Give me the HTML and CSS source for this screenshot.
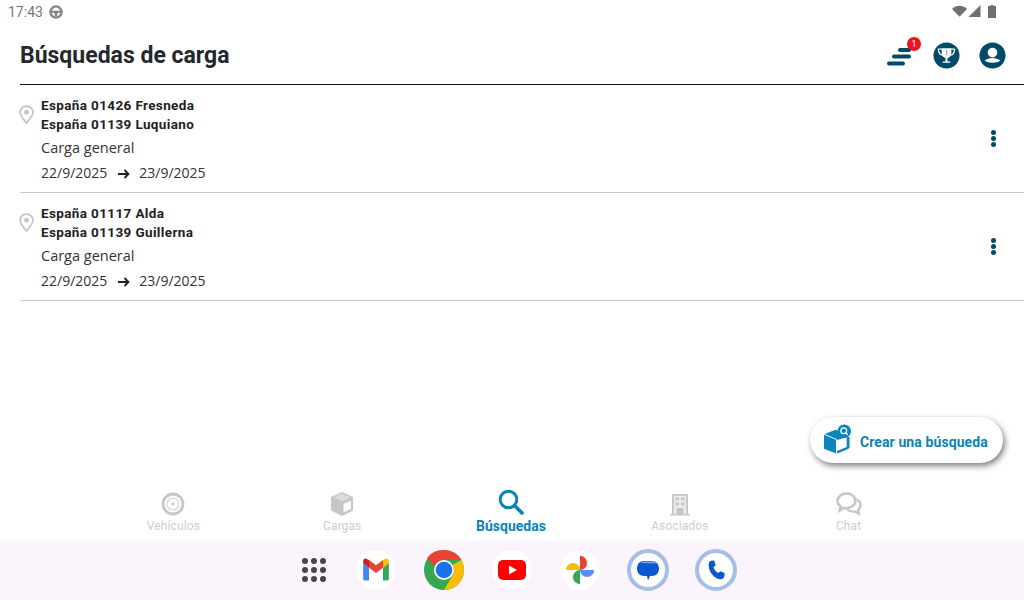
FILE: index.html
```html
<!DOCTYPE html>
<html lang="es">
<head>
<meta charset="utf-8">
<title>Búsquedas de carga</title>
<link rel="stylesheet" href="styles.css">
</head>
<body>
<div class="screen">
  <div class="status">
    <div class="status-left">
      <span class="clock">17:43</span>
      <svg class="status-gear" viewBox="0 0 14 14"><circle cx="7" cy="7" r="5.600" fill="none" stroke="#858585" stroke-width="2.400"/><path d="M2 5.800h10v2H8.800L8 11H6l-.8-3.200H2z" fill="#858585"/></svg>
    </div>
    <div class="status-right">
      <svg class="st-wifi" viewBox="0 0 16 12"><path d="M0 3.800C4.500-.8 11.500-.8 16 3.800L8 12z" fill="#6f6f6f"/></svg>
      <svg class="st-signal" viewBox="0 0 12 12"><path d="M12 0v12H0z" fill="#6f6f6f"/></svg>
      <svg class="st-batt" viewBox="0 0 8 13"><path d="M2.500 0h3v1H8v12H0V1h2.500z" fill="#6f6f6f"/></svg>
    </div>
  </div>

  <header class="header">
    <h1 class="title">Búsquedas de carga</h1>
    <div class="actions">
      <div class="stack">
        <svg class="stack-icon" viewBox="0 0 24 20"><g fill="none" stroke="#004a6c" stroke-width="4" stroke-linecap="round"><path d="M13 3h9"/><path d="M7 9.500h15"/><path d="M2 16.500h14"/></g></svg>
        <span class="badge">1</span>
      </div>
      <svg class="round-icon" viewBox="0 0 28 28"><circle cx="14" cy="14" r="13.500" fill="#004a6c"/><g fill="none" stroke="#fff" stroke-width="1.300"><path d="M9.500 7.500H5.600c0 3.800 1.200 5.700 4.600 6.200M18.500 7.500h3.900c0 3.800-1.200 5.700-4.600 6.200"/></g><path d="M9 6.500h10v5c0 3-2 4.800-4 5.300v3.400h3v1.400h-8v-1.400h3v-3.400c-2-.5-4-2.300-4-5.300z" fill="#fff"/><path d="M13.300 8h1.400v6h-1.400z" fill="#8fb0c0"/></svg>
      <svg class="round-icon" viewBox="0 0 28 28"><circle cx="14" cy="14" r="13.500" fill="#004a6c"/><circle cx="14" cy="11" r="5" fill="#fff"/><path d="M5.800 19.500c2-2.100 5-3 8.200-3s6.200.9 8.200 3c-1.800 1.300-4.800 2-8.200 2s-6.400-.7-8.200-2z" fill="#fff"/></svg>
    </div>
  </header>

  <main class="list">
    <article class="row">
      <svg class="pin" viewBox="0 0 16 20"><path d="M8 1C4 1 1.200 4 1.200 7.600 1.200 11.800 5.500 16 8 19c2.500-3 6.800-7.200 6.800-11.400C14.800 4 12 1 8 1z" fill="none" stroke="#c4c4c4" stroke-width="1.800"/><circle cx="8" cy="7.600" r="2.600" fill="#c4c4c4"/></svg>
      <div class="info">
        <div class="place">España 01426 Fresneda</div>
        <div class="place">España 01139 Luquiano</div>
        <div class="kind">Carga general</div>
        <div class="dates"><span>22/9/2025</span><svg class="arrow" viewBox="0 0 12 10"><path d="M0 5h10M6.500 1l4 4-4 4" fill="none" stroke="#222" stroke-width="1.800"/></svg><span>23/9/2025</span></div>
      </div>
      <div class="more"><i></i><i></i><i></i></div>
    </article>
    <article class="row">
      <svg class="pin" viewBox="0 0 16 20"><path d="M8 1C4 1 1.200 4 1.200 7.600 1.200 11.800 5.500 16 8 19c2.500-3 6.800-7.200 6.800-11.400C14.800 4 12 1 8 1z" fill="none" stroke="#c4c4c4" stroke-width="1.800"/><circle cx="8" cy="7.600" r="2.600" fill="#c4c4c4"/></svg>
      <div class="info">
        <div class="place">España 01117 Alda</div>
        <div class="place">España 01139 Guillerna</div>
        <div class="kind">Carga general</div>
        <div class="dates"><span>22/9/2025</span><svg class="arrow" viewBox="0 0 12 10"><path d="M0 5h10M6.500 1l4 4-4 4" fill="none" stroke="#222" stroke-width="1.800"/></svg><span>23/9/2025</span></div>
      </div>
      <div class="more"><i></i><i></i><i></i></div>
    </article>
  </main>

  <button class="fab">
    <svg class="fab-icon" viewBox="0 0 28 30"><path d="M0 10 12 5.500l5.500 2.500 1 4.500 8 .5v11L12.500 30 0 25z" fill="#0d86bd"/><path d="M13.500 16 24.500 13v10l-11 4.500z" fill="#fff"/><path d="M24.500 13v11.500L13.500 29" fill="none" stroke="#0d86bd" stroke-width="2"/><path d="M0 10l13 5.500V30" fill="none" stroke="#fff" stroke-width="1"/><circle cx="21" cy="7" r="7" fill="#0d86bd"/><circle cx="20.500" cy="6.500" r="3" fill="none" stroke="#fff" stroke-width="1.300"/><path d="M22.700 8.700l2 2" stroke="#fff" stroke-width="1.300"/></svg>
    <span class="fab-label">Crear una búsqueda</span>
  </button>

  <nav class="tabs">
    <div class="tab">
      <svg class="tab-icon" viewBox="0 0 24 24"><circle cx="12" cy="12" r="10" fill="none" stroke="#c6c6c6" stroke-width="2.800"/><circle cx="12" cy="12" r="6" fill="none" stroke="#d6d6d6" stroke-width="1.200"/><circle cx="12" cy="12" r="1.600" fill="#c6c6c6"/></svg>
      <span>Vehículos</span>
    </div>
    <div class="tab">
      <svg class="tab-icon" viewBox="0 0 24 24"><path d="M12 0 23 5v13.500L12 24 1 18.500V5z" fill="#c6c6c6"/><path d="M3.500 5.500 12 1.800 20.500 5.500 12 9.500z" fill="#dcdcdc"/><path d="M13.500 12 21 8.500v8.200L13.500 20.500z" fill="#fff"/></svg>
      <span>Cargas</span>
    </div>
    <div class="tab active">
      <svg class="tab-icon big" viewBox="0 0 26 26"><circle cx="10.500" cy="10.500" r="8.300" fill="none" stroke="#0b83b5" stroke-width="3"/><path d="M16.500 16.500 24 24" stroke="#0b83b5" stroke-width="3.600" stroke-linecap="round"/></svg>
      <span>Búsquedas</span>
    </div>
    <div class="tab">
      <svg class="tab-icon" viewBox="0 0 24 24"><path d="M4 22V2h16v20h2v1.500H2V22z" fill="#c6c6c6"/><path d="M5.800 3.700h12.400V22H5.800z" fill="#eaeaea"/><g fill="#c6c6c6"><rect x="7.500" y="5.500" width="3.500" height="3"/><rect x="13" y="5.500" width="3.500" height="3"/><rect x="7.500" y="10.500" width="3.500" height="3"/><rect x="13" y="10.500" width="3.500" height="3"/><rect x="8.500" y="16" width="7" height="6"/></g></svg>
      <span>Asociados</span>
    </div>
    <div class="tab">
      <svg class="tab-icon wide" viewBox="0 0 26 24"><path d="M10.500 1.500c5 0 9 3.300 9 7.400s-4 7.300-9 7.300c-1 0-1.900-.1-2.700-.3L3.800 18.500l.9-4C2.800 13 1.500 11.100 1.500 8.900c0-4.100 4-7.400 9-7.400z" fill="none" stroke="#c6c6c6" stroke-width="2.600"/><path d="M21 7.500c2.200 1.300 3.600 3.300 3.600 5.500 0 1.900-.9 3.500-2.500 4.800l.8 3.700-4.200-2.100c-2.800.5-5.700-.2-7.500-1.900" fill="none" stroke="#c6c6c6" stroke-width="2.400"/></svg>
      <span>Chat</span>
    </div>
  </nav>

  <footer class="dock">
    <div class="dock-apps"><i></i><i></i><i></i><i></i><i></i><i></i><i></i><i></i><i></i></div>
    <div class="dock-app plain">
      <svg viewBox="0 0 24 24" class="glyph"><path d="M1 6v13.500c0 .8.700 1.500 1.500 1.500H6V10z" fill="#4285f4"/><path d="M18 10v11h3.500c.8 0 1.500-.7 1.500-1.500V6z" fill="#34a853"/><path d="M18 3.500V10l5-4V4.500c0-1.900-2-2.900-3.500-1.800z" fill="#fbbc04"/><path d="M6 10V3.500L12 8l6-4.500V10l-6 4.500z" fill="#ea4335"/><path d="M1 4.500V6l5 4V3.500L4.500 2.700C3 1.600 1 2.600 1 4.500z" fill="#c5221f"/></svg>
    </div>
    <div class="dock-app">
      <svg viewBox="0 0 40 40" class="full"><circle cx="20" cy="20" r="20" fill="#34a853"/><path d="M20 0a20 20 0 0 1 17.300 10H20a10 10 0 0 0-9.300 6.500L3 8.200A20 20 0 0 1 20 0z" fill="#ea4335"/><path d="M37.300 10A20 20 0 0 1 20 40l8.500-14.500A10 10 0 0 0 28.500 15z" fill="#fbbc04"/><circle cx="20" cy="20" r="10" fill="#fff"/><circle cx="20" cy="20" r="8.300" fill="#1a73e8"/></svg>
    </div>
    <div class="dock-app plain">
      <svg viewBox="0 0 28 20" class="glyph yt"><rect width="28" height="20" rx="5" fill="#f00"/><path d="M11 5.500v9l8-4.500z" fill="#fff"/></svg>
    </div>
    <div class="dock-app plain">
      <svg viewBox="0 0 36 36" class="glyph photos"><path d="M18 18V1a8.500 8.500 0 0 1 0 17z" fill="#ea4335"/><path d="M18 18h17a8.500 8.500 0 0 1-17 0z" fill="#5b8df5"/><path d="M18 18v17a8.500 8.500 0 0 1 0-17z" fill="#34a853"/><path d="M18 18H1a8.500 8.500 0 0 1 17 0z" fill="#fbbc04"/></svg>
    </div>
    <div class="dock-app ring">
      <svg viewBox="0 0 24 24" class="glyph bubble"><path d="M8 3h8c4.200 0 7 3 7 7.500S20.200 18 16 18h-2l-2 4.500-1-4.500H8c-4.200 0-7-3-7-7.500S3.800 3 8 3z" fill="#0b57d0"/><path d="M5 5c1-1 2-1.500 3-1.500h8c2 0 3.500.5 5 2z" fill="#7aa2f0"/></svg>
    </div>
    <div class="dock-app ring">
      <svg viewBox="0 0 24 24" class="glyph small"><path d="M6.500 2 10 1.500l1.700 5.500-2.500 2c.8 2.700 2.800 5 5.300 6.200l2.300-1.900 4.700 2.200-.5 3.500c-.2 1.400-1.500 3-3.500 3C10 22 4 13.500 4 7c0-2.500.8-4.700 2.500-5z" fill="#0b57d0"/></svg>
    </div>
  </footer>
</div>
</body>
</html>
```

FILE: styles.css
```css
* { box-sizing: border-box; }
html, body { margin: 0; height: 100%; }
body { background: #fff; font-family: Roboto, "Liberation Sans", sans-serif; overflow: hidden; }
.screen { position: relative; width: 1024px; height: 600px; display: flex; flex-direction: column; background: #fff; }

.status { height: 24px; flex: none; display: flex; justify-content: space-between; align-items: center; padding: 0 28px 0 8px; }
.status-left { display: flex; align-items: center; gap: 6px; }
.clock { font-size: 14px; color: #777; }
.status-gear { width: 14px; height: 14px; }
.status-right { display: flex; align-items: center; gap: 1px; margin-top: -2px; }
.st-wifi { width: 15px; height: 12px; }
.st-signal { width: 13px; height: 12px; }
.st-batt { width: 8px; height: 13px; margin-left: 6px; }

.header { height: 61px; flex: none; margin-left: 20px; border-bottom: 1px solid #111; display: flex; justify-content: space-between; align-items: center; padding: 0 18px 0 0; }
.title { margin: 2px 0 0; font-size: 23px; font-weight: 700; color: #23282d; }
.actions { display: flex; align-items: center; gap: 19px; margin-top: 2px; }
.stack { position: relative; width: 28px; height: 28px; display: flex; align-items: flex-end; }
.stack-icon { width: 26px; height: 20px; margin-bottom: 2px; }
.badge { position: absolute; top: -4px; right: -7px; width: 14px; height: 14px; border-radius: 50%; background: #f2101c; color: #fff; font-size: 9px; line-height: 14px; text-align: center; }
.round-icon { width: 27px; height: 27px; display: block; }

.list { flex: 1; min-height: 0; padding-left: 20px; }
.row { height: 108px; border-bottom: 1px solid #c8c8c8; display: flex; align-items: flex-start; padding: 11px 0 0 0; position: relative; }
.pin { width: 15px; height: 19px; margin: 9px 7px 0 -1px; flex: none; }
.info { flex: 1; }
.place { font-size: 13.500px; font-weight: 700; line-height: 19px; color: #222; letter-spacing: .37px; }
.kind { font-family: "Open Sans", sans-serif; font-size: 14.500px; line-height: 20px; color: #333; margin-top: 4px; }
.dates { font-family: "Open Sans", sans-serif; font-size: 14px; line-height: 20px; color: #333; margin-top: 5px; display: flex; align-items: center; gap: 10px; }
.arrow { width: 12px; height: 10px; margin: 2px -1px 0 1px; }
.more { position: absolute; right: 28px; top: 45px; display: flex; flex-direction: column; gap: 1px; }
.more i { width: 5px; height: 5px; border-radius: 50%; background: #004a6c; display: block; }

.fab { position: absolute; left: 810px; top: 417px; width: 193px; height: 46px; border: none; border-radius: 23px; background: #fff; box-shadow: 2px 3px 6px rgba(0,0,0,.5); display: flex; align-items: center; gap: 9px; padding: 0 0 0 14px; font-family: Roboto, sans-serif; font-size: 14px; font-weight: 700; color: #0b83b5; letter-spacing: .1px; }
.fab-icon { width: 27px; height: 30px; flex: none; margin-top: -2px; }
.fab-label { margin-top: 4px; }

.tabs { height: 55px; flex: none; display: flex; padding: 0 91px 0 89px; }
.tab { flex: 1; display: flex; flex-direction: column; align-items: center; justify-content: flex-end; font-size: 12px; color: #cdcdcd; padding-bottom: 7px; letter-spacing: .1px; }
.tab-icon { width: 24px; height: 24px; margin-bottom: 3px; }
.tab-icon.big { width: 26px; height: 26px; margin-bottom: 3px; }
.tab-icon.wide { width: 26px; }
.tab.active { color: #0b83b5; font-weight: 700; font-size: 14px; padding-bottom: 6px; letter-spacing: 0; }

.dock { height: 60px; flex: none; background: #fbf4fd; display: flex; align-items: center; justify-content: center; gap: 26px; padding-left: 15px; }
.dock-apps { width: 24px; display: grid; grid-template-columns: repeat(3, 6px); gap: 3px; margin-right: 3px; flex: none; }
.dock-apps i { width: 6px; height: 6px; border-radius: 50%; background: #45454d; display: block; }
.dock-app { width: 42px; height: 42px; border-radius: 50%; display: flex; align-items: center; justify-content: center; flex: none; }
.dock-app.plain { background: #fff; box-shadow: inset 0 0 0 1px #f7f0f9; }
.dock-app.ring { background: #fff; border: 4px solid #a6bee6; }
.full { width: 40px; height: 40px; display: block; }
.glyph { width: 28px; height: 28px; }
.glyph.yt { width: 28px; height: 20px; }
.glyph.photos { width: 30px; height: 30px; }
.glyph.small { width: 22px; height: 22px; }
.glyph.bubble { width: 24px; height: 24px; }
```
